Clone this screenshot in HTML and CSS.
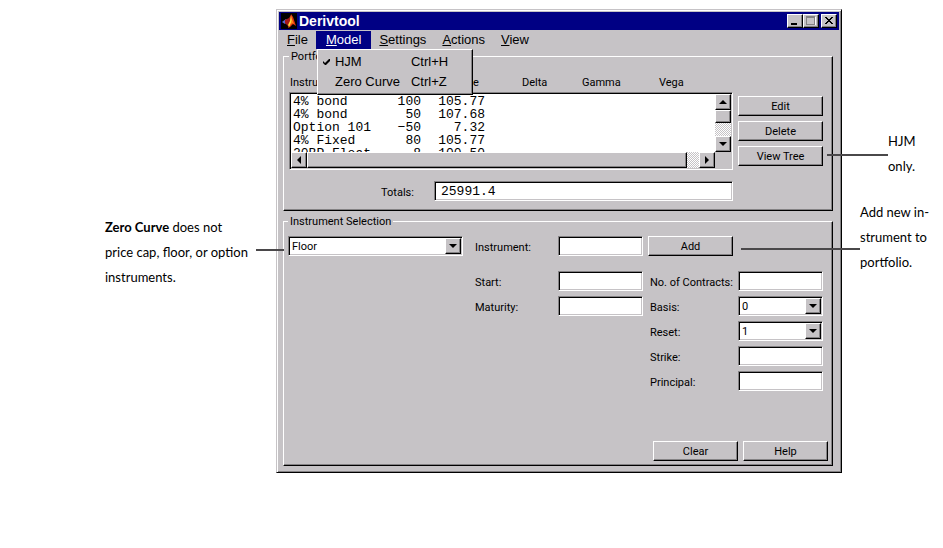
FILE: index.html
```
<!DOCTYPE html>
<html lang="en">
  <head>
    <meta charset="UTF-8" />
    <meta name="viewport" content="width=device-width, initial-scale=1.0" />
    <title>Derivtool</title>
    <link rel="stylesheet" href="styles.css">
  </head>
  <body>
    <div class="figure">
      <aside class="notes notes-left">
        <p class="note note-curve"><b>Zero Curve</b> does not<br>price cap, floor, or option<br>instruments.</p>
      </aside>

      <main class="window">
        <header class="titlebar">
          <svg class="logo" viewBox="0 0 16 16" aria-hidden="true">
            <rect width="16" height="16" fill="#000" />
            <path d="M1 9l4-3 2 2-3 3z" fill="#5a6ad6" />
            <path d="M4 7l4-2 2-3 1 6-4 5-3-3z" fill="#a51818" />
            <path d="M10 1l2 3 3 9-3-2-3 3-2 1 2-7z" fill="#e03010" />
            <path d="M10 2l1 6-3 6-1-2 2-4z" fill="#ffe040" />
            <path d="M11 6l2 5-2-1-2 3z" fill="#ff8418" />
          </svg>
          <h1>Derivtool</h1>
          <div class="window-buttons">
            <button type="button" class="mini" aria-label="Minimize">
              <svg viewBox="0 0 14 12"><path d="M3 8h6v2H3z" /></svg>
            </button>
            <button type="button" class="mini" aria-label="Maximize" disabled>
              <svg viewBox="0 0 14 12"><path d="M2 1h9v9H2zM3 3v6h7V3z" fill="#848284" fill-rule="evenodd" /><path d="M3 10h9V2h-1v8H3z" fill="#fff" /></svg>
            </button>
            <button type="button" class="mini close" aria-label="Close">
              <svg viewBox="0 0 14 12" shape-rendering="crispEdges"><path d="M3 2h2v1h1v1h2V3h1V2h2v1h-1v1H9v1H8v1h1v1h1v1h1v1H9V8H8V7H6v1H5v1H3V8h1V7h1V6h1V5H5V4H4V3H3z" /></svg>
            </button>
          </div>
        </header>

        <nav class="menubar">
          <button type="button" class="menu"><u>F</u>ile</button>
          <div class="menu-holder">
            <button type="button" class="menu active"><u>M</u>odel</button>
            <!-- Open menu -->
            <div class="dropdown" role="menu">
              <button type="button" role="menuitem">
                <svg viewBox="0 0 9 8"><path d="M1 3l2 2 4-4h1v2L4 7H3L1 5z" /></svg>
                <span class="name">HJM</span><span>Ctrl+H</span>
              </button>
              <button type="button" role="menuitem">
                <span class="name">Zero Curve</span><span>Ctrl+Z</span>
              </button>
            </div>
          </div>
          <button type="button" class="menu"><u>S</u>ettings</button>
          <button type="button" class="menu"><u>A</u>ctions</button>
          <button type="button" class="menu"><u>V</u>iew</button>
        </nav>

        <form class="content">
          <fieldset class="portfolio">
            <legend>Portfolio</legend>
            <div class="portfolio-main">
              <div class="headings">
                <span>Instrument</span><span>Quantity</span><span class="price">Price</span>
                <span>Delta</span><span>Gamma</span><span>Vega</span>
              </div>
              <div class="listbox">
                <div class="list-view">
                  <table>
                    <tr><td>4% bond</td><td>100</td><td>105.77</td></tr>
                    <tr><td>4% bond</td><td>50</td><td>107.68</td></tr>
                    <tr><td>Option 101</td><td>−50</td><td>7.32</td></tr>
                    <tr><td>4% Fixed</td><td>80</td><td>105.77</td></tr>
                    <tr><td>20BP Float</td><td>8</td><td>100.50</td></tr>
                  </table>
                </div>
                <div class="scroll vertical">
                  <button type="button" class="arrow" aria-label="Scroll up"><svg viewBox="0 0 8 8"><path d="M4 2l4 4H0z" /></svg></button>
                  <div class="thumb"></div>
                  <div class="trough"></div>
                  <button type="button" class="arrow" aria-label="Scroll down"><svg viewBox="0 0 8 8"><path d="M4 6l4-4H0z" /></svg></button>
                </div>
                <div class="scroll horizontal">
                  <button type="button" class="arrow" aria-label="Scroll left"><svg viewBox="0 0 8 8"><path d="M2 4l4-4v8z" /></svg></button>
                  <div class="thumb"></div>
                  <div class="trough"></div>
                  <button type="button" class="arrow" aria-label="Scroll right"><svg viewBox="0 0 8 8"><path d="M6 4L2 0v8z" /></svg></button>
                </div>
              </div>
              <div class="totals">
                <label for="totals">Totals:</label>
                <input type="text" id="totals" class="field" value="25991.4" />
              </div>
            </div>
            <div class="actions">
              <button type="button" class="push">Edit</button>
              <button type="button" class="push">Delete</button>
              <button type="button" class="push">View Tree</button>
            </div>
          </fieldset>

          <fieldset class="selection">
            <legend>Instrument Selection</legend>
            <div class="columns">
              <div class="column">
                <div class="combo">
                  <select class="field" aria-label="Instrument type"><option>Floor</option></select>
                  <span class="arrow"><svg viewBox="0 0 8 8"><path d="M4 6l4-4H0z" /></svg></span>
                </div>
              </div>
              <div class="column middle">
                <div class="row first">
                  <label for="instrument">Instrument:</label>
                  <input type="text" id="instrument" class="field" />
                </div>
                <div class="row">
                  <label for="start">Start:</label>
                  <input type="text" id="start" class="field" />
                </div>
                <div class="row">
                  <label for="maturity">Maturity:</label>
                  <input type="text" id="maturity" class="field" />
                </div>
              </div>
              <div class="column">
                <div class="row first">
                  <button type="button" class="push">Add</button>
                </div>
                <div class="row">
                  <label for="contracts">No. of Contracts:</label>
                  <input type="text" id="contracts" class="field" />
                </div>
                <div class="row">
                  <label for="basis">Basis:</label>
                  <div class="combo">
                    <select id="basis" class="field"><option>0</option></select>
                    <span class="arrow"><svg viewBox="0 0 8 8"><path d="M4 6l4-4H0z" /></svg></span>
                  </div>
                </div>
                <div class="row">
                  <label for="reset">Reset:</label>
                  <div class="combo">
                    <select id="reset" class="field"><option>1</option></select>
                    <span class="arrow"><svg viewBox="0 0 8 8"><path d="M4 6l4-4H0z" /></svg></span>
                  </div>
                </div>
                <div class="row">
                  <label for="strike">Strike:</label>
                  <input type="text" id="strike" class="field" />
                </div>
                <div class="row">
                  <label for="principal">Principal:</label>
                  <input type="text" id="principal" class="field" />
                </div>
              </div>
            </div>
            <div class="footer">
              <button type="reset" class="push">Clear</button>
              <button type="button" class="push">Help</button>
            </div>
          </fieldset>
        </form>
      </main>

      <aside class="notes notes-right">
        <p class="note note-tree">HJM<br>only.</p>
        <p class="note note-add">Add new in-<br>strument to<br>portfolio.</p>
      </aside>
    </div>
  </body>
</html>
```
FILE: styles.css
```
* {
  box-sizing: border-box;
}

body {
  margin: 0;
  background-color: #fff;
  color: #000;
  font-family: Roboto, "Liberation Sans", Arial, sans-serif;
  font-size: 11px;
}

button,
input,
select {
  margin: 0;
  padding: 0;
  border: none;
  border-radius: 0;
  font: inherit;
  color: #000;
}

button {
  background-color: #c6c3c6;
}

svg {
  display: block;
}

.figure {
  display: flex;
  align-items: flex-start;
  padding-top: 9px;
}

/* Notes beside the window */
.notes {
  flex: none;
}

.notes-left {
  width: 276px;
  padding: 206px 0 0 105px;
}

.notes-right {
  width: 101px;
  padding-top: 120px;
}

.note {
  position: relative;
  margin: 0;
  font-family: Lato, "Liberation Sans", Arial, sans-serif;
  font-size: 13px;
  line-height: 25px;
  white-space: nowrap;
}

.note-tree {
  padding-left: 46px;
}

.note-add {
  margin-top: 21px;
  padding-left: 18px;
}

/* Lines that lead from a note to its control */
.note::before {
  content: "";
  position: absolute;
  z-index: 1;
  height: 2px;
  background-color: #4a484a;
}

.note-curve::before {
  top: 34px;
  left: 151px;
  width: 28px;
}

.note-tree::before {
  top: 25px;
  left: -15px;
  width: 61px;
}

.note-add::before {
  top: 48px;
  left: -101px;
  width: 119px;
}

/* Window */
.window {
  flex: 1;
  min-width: 0;
  padding: 2px;
  background-color: #c6c3c6;
  border: 1px solid;
  border-color: #c6c3c6 #000 #000 #c6c3c6;
  box-shadow: inset 1px 1px #fff, inset -1px -1px #848284;
}

.titlebar {
  display: flex;
  align-items: center;
  height: 18px;
  padding: 0 2px;
  background-color: #000084;
  color: #fff;
}

.logo {
  width: 16px;
  height: 16px;
}

.titlebar h1 {
  flex: 1;
  margin: 0 0 0 2px;
  font-family: "Liberation Sans", Arial, sans-serif;
  font-size: 14px;
  line-height: 18px;
}

.window-buttons {
  display: flex;
}

.mini {
  width: 16px;
  height: 14px;
}

.mini svg {
  width: 14px;
  height: 12px;
}

.close {
  margin-left: 2px;
}

/* Raised edges */
.mini,
.push,
.arrow,
.thumb {
  background-color: #c6c3c6;
  border: 1px solid;
  border-color: #fff #000 #000 #fff;
  box-shadow: inset -1px -1px #848284;
}

/* Menu bar */
.menubar {
  display: flex;
  height: 19px;
  padding-top: 1px;
  font-family: "Liberation Sans", Arial, sans-serif;
}

.menu {
  height: 18px;
  padding: 0 8px;
  font-size: 13px;
  line-height: 18px;
}

.menu.active {
  padding: 0 10px;
  background-color: #000084;
  color: #fff;
}

.menu-holder {
  position: relative;
}

.dropdown {
  position: absolute;
  z-index: 2;
  top: 18px;
  left: 1px;
  width: 156px;
  padding: 2px;
  background-color: #c6c3c6;
  border: 1px solid;
  border-color: #fff #000 #000 #fff;
  box-shadow: inset -1px -1px #848284;
}

.dropdown button {
  position: relative;
  display: flex;
  width: 100%;
  padding-left: 15px;
  font-size: 13px;
  line-height: 20px;
}

.dropdown svg {
  position: absolute;
  top: 6px;
  left: 2px;
  width: 9px;
  height: 8px;
}

.dropdown .name {
  width: 76px;
  text-align: left;
}

/* Groups */
.content {
  padding: 0 6px 4px 4px;
}

fieldset {
  min-width: 0;
  margin: 0;
  border: 1px solid;
  border-color: #fff #000 #000 #fff;
  box-shadow: inset -1px -1px #848284;
}

legend {
  padding: 2px 2px 0;
  line-height: 12px;
}

.portfolio {
  display: flex;
  gap: 5px;
  padding: 13px 9px 9px 5px;
}

.portfolio-main {
  flex: 1;
  min-width: 0;
}

.headings {
  display: grid;
  grid-template-columns: 90px 72px 70px 60px 77px 1fr;
  height: 16px;
  padding-left: 1px;
  line-height: 14px;
}

.price {
  padding-left: 2px;
}

/* Sunken edges */
.listbox,
.field {
  border: 1px solid;
  border-color: #848284 #fff #fff #848284;
  box-shadow: inset 1px 1px #000, inset -1px -1px #c6c3c6;
}

.listbox {
  display: grid;
  grid-template: 58px 16px / 1fr 16px;
  padding: 1px;
  background-color: #c6c3c6;
}

.list-view {
  overflow: hidden;
  background-color: #fff;
  padding: 1px 2px;
}

.listbox table {
  border-collapse: collapse;
  font-family: "Liberation Mono", "Courier New", monospace;
  font-size: 13px;
  line-height: 13px;
}

.listbox td {
  width: 64px;
  padding: 0;
  text-align: right;
}

.listbox td:first-child {
  width: 88px;
  text-align: left;
}

.listbox td:nth-child(2) {
  width: 40px;
}

.scroll {
  display: flex;
}

.vertical {
  flex-direction: column;
}

.arrow {
  display: flex;
  flex: none;
  align-items: center;
  justify-content: center;
  width: 16px;
  height: 16px;
}

.arrow svg {
  width: 8px;
  height: 8px;
}

.trough {
  flex: 1;
  background: repeating-conic-gradient(#fff 0 25%, #c6c3c6 0 50%) 0 0 / 2px 2px;
}

.vertical .thumb {
  height: 13px;
}

.horizontal .thumb {
  flex: 32;
}

.totals {
  display: flex;
  margin-top: 11px;
  padding-left: 92px;
}

.totals label {
  width: 53px;
}

.totals .field {
  flex: 1;
  padding-left: 6px;
  font-family: "Liberation Mono", "Courier New", monospace;
  font-size: 13px;
}

label {
  padding-top: 4px;
  line-height: 16px;
  white-space: nowrap;
}

.field {
  width: 85px;
  height: 20px;
  padding: 0 3px;
  background-color: #fff;
  outline: none;
}

.push {
  width: 85px;
  height: 20px;
  line-height: 17px;
  text-align: center;
}

.actions {
  display: flex;
  flex-direction: column;
  gap: 5px;
  padding-top: 20px;
}

/* Instrument selection */
.selection {
  margin-top: 3px;
  padding: 8px 4px 4px;
}

.columns {
  display: grid;
  grid-template-columns: repeat(3, 1fr);
  gap: 5px;
  margin-right: 5px;
}

.column {
  display: flex;
  flex-direction: column;
  gap: 5px;
}

.middle {
  padding-left: 7px;
}

.row {
  display: flex;
  justify-content: space-between;
  height: 20px;
}

.row.first {
  margin-bottom: 10px;
}

.column:last-child label {
  padding-left: 2px;
}

.combo {
  position: relative;
}

.combo .field {
  display: block;
  appearance: none;
}

.column > .combo .field {
  width: 100%;
}

.combo .arrow {
  position: absolute;
  top: 2px;
  right: 2px;
  pointer-events: none;
}

.footer {
  display: flex;
  justify-content: flex-end;
  gap: 5px;
  margin-top: 50px;
}
```
